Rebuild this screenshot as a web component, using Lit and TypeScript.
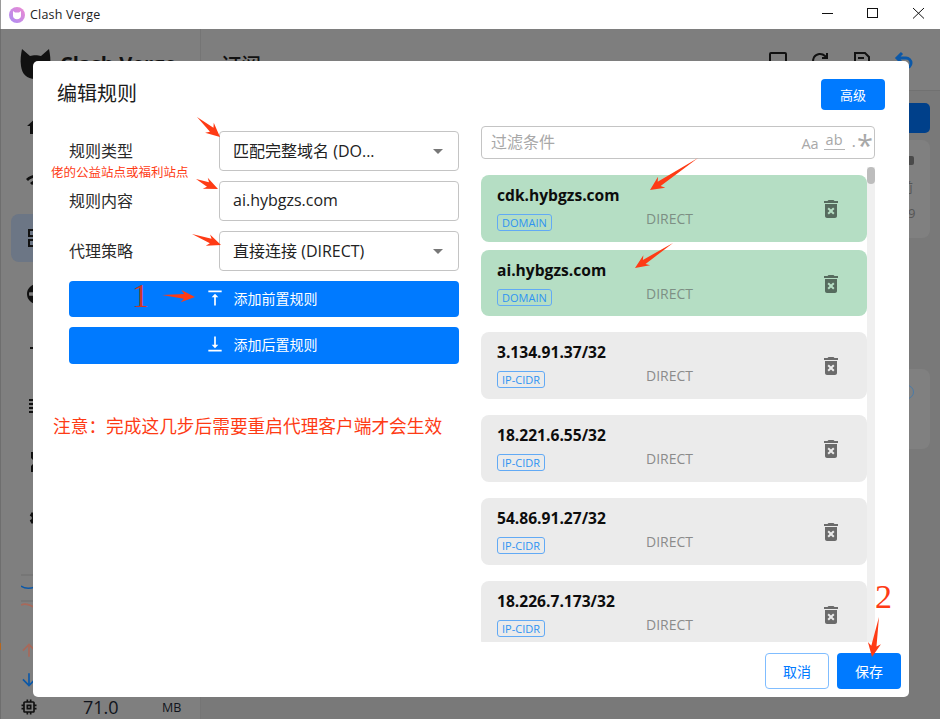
import { LitElement, css, html, svg } from 'lit';
import { customElement } from 'lit/decorators.js';

interface Rule {
  name: string;
  tag: string;
  added?: boolean;
}

const RULES: Rule[] = [
  { name: 'cdk.hybgzs.com', tag: 'DOMAIN', added: true },
  { name: 'ai.hybgzs.com', tag: 'DOMAIN', added: true },
  { name: '3.134.91.37/32', tag: 'IP-CIDR' },
  { name: '18.221.6.55/32', tag: 'IP-CIDR' },
  { name: '54.86.91.27/32', tag: 'IP-CIDR' },
  { name: '18.226.7.173/32', tag: 'IP-CIDR' }
];

// annotation arrows: tail x, tail y, tip x, tip y, head width
const ARROWS: number[][] = [
  [197, 117, 220, 137, 12],
  [196, 179, 218, 189, 11],
  [192, 234, 221, 245, 11],
  [162, 295, 195, 297, 11],
  [698, 158, 650, 190, 12],
  [673, 243, 635, 268, 11],
  [879, 617, 872, 657, 12]
];

const NAV_ICONS = [
  'M10 20v-6h4v6h5v-8h3L12 3 2 12h3v8z',
  'm1 9 2 2c4.97-4.97 13.03-4.97 18 0l2-2C16.93 2.93 7.08 2.93 1 9zm8 8 3 3 3-3c-1.65-1.66-4.34-1.66-6 0zm-4-4 2 2c2.76-2.76 7.24-2.76 10 0l2-2C15.14 9.14 8.87 9.14 5 13z',
  'M3 11h8V3H3v8zm2-6h4v4H5V5zM3 21h8v-8H3v8zm2-6h4v4H5v-4zm8-12v8h8V3h-8zm6 6h-4V5h4v4zm-6 4h3v3h-3zm3 3h3v3h-3zm3-3h2v3h-2zm-6 6h3v2h-3zm6 0h2v2h-2z',
  'M12 2C6.48 2 2 6.48 2 12s4.48 10 10 10 10-4.48 10-10S17.52 2 12 2zM4 12c0-.61.08-1.21.21-1.78h15.58c.13.57.21 1.17.21 1.78s-.08 1.21-.21 1.78H4.21A8.1 8.1 0 0 1 4 12zm8 8c-2 0-3.6-3-3.9-6.2h7.8C15.6 17 14 20 12 20zM8.1 10.2C8.4 7 10 4 12 4s3.6 3 3.9 6.2H8.1z',
  'M14.59 15.59 16 17l-4 4-4-4 1.41-1.41L11 17.17V11H5V9h8v8.17z',
  'M14 17H4v2h10v-2zm6-8H4v2h16V9zM4 15h16v-2H4v2zM4 5v2h16V5H4z',
  'M6 2h12v6l-4 4 4 4v6H6v-6l4-4-4-4V2zm2 2v3.2l4 4 4-4V4H8z',
  'M19.14 12.94a7 7 0 0 0 0-1.88l2.03-1.58-1.92-3.32-2.39.96a7 7 0 0 0-1.62-.94L14.88 3.6h-3.84l-.36 2.58c-.59.24-1.13.56-1.62.94l-2.39-.96-1.92 3.32 2.03 1.58a7 7 0 0 0 0 1.88l-2.03 1.58 1.92 3.32 2.39-.96c.49.38 1.03.7 1.62.94l.36 2.58h3.84l.36-2.58c.59-.24 1.13-.56 1.62-.94l2.39.96 1.92-3.32-2.03-1.58zM12 15.6a3.6 3.6 0 1 1 0-7.2 3.6 3.6 0 0 1 0 7.2z'
];

const TRASH =
  'M6 19c0 1.1.9 2 2 2h8c1.1 0 2-.9 2-2V7H6zm2.46-7.12 1.41-1.41L12 12.59l2.12-2.12 1.41 1.41L13.41 14l2.12 2.12-1.41 1.41L12 15.41l-2.12 2.12-1.41-1.41L10.59 14zM15.5 4l-1-1h-5l-1 1H5v2h14V4z';

function arrowPoints([x1, y1, x2, y2, w]: number[]): string {
  const dx = x2 - x1;
  const dy = y2 - y1;
  const len = Math.hypot(dx, dy);
  const nx = -dy / len;
  const ny = dx / len;
  const at = (t: number, off: number) => `${x1 + dx * t + nx * off},${y1 + dy * t + ny * off}`;
  const neck = 1 - 11 / len;
  const barb = 1 - 14 / len;
  return [
    at(0, 0),
    at(neck, w * 0.22),
    at(barb, w * 0.55),
    at(1, 0),
    at(barb, -w * 0.55),
    at(neck, -w * 0.22)
  ].join(' ');
}

@customElement('app-root')
export class AppRoot extends LitElement {
  public static override styles = css`
    :host {
      display: block;
      position: relative;
      width: 940px;
      height: 719px;
      overflow: hidden;
      background: #fff;
      font-family: 'Open Sans', 'Noto Sans CJK SC', sans-serif;
      color: #1a1a1a;
    }

    * {
      box-sizing: border-box;
    }

    .titlebar {
      display: flex;
      align-items: center;
      height: 29px;
      border-left: 1px solid #9a9a9a;
      padding-left: 8px;
      background: #fff;
      font-size: 12.5px;
      color: #222;
    }

    .titlebar .name {
      margin-left: 5px;
      letter-spacing: 0.2px;
    }

    .controls {
      display: flex;
      margin-left: auto;
    }

    .controls svg {
      display: block;
      width: 46px;
      height: 29px;
    }

    .app {
      display: flex;
      height: 690px;
      border-left: 1px solid #6e6e6e;
      background: #7f7f7f;
    }

    .sidebar {
      display: flex;
      flex-direction: column;
      width: 200px;
      border-right: 1px solid #757575;
    }

    .logo {
      display: flex;
      align-items: flex-start;
      gap: 9px;
      height: 76px;
      padding: 20px 0 0 19px;
      font-size: 20px;
      font-weight: 700;
      line-height: 30px;
      color: #111;
    }

    .logo svg {
      width: 31px;
      height: 30px;
      flex: none;
    }

    .nav {
      display: flex;
      flex-direction: column;
      padding: 0 10px;
    }

    .nav-item {
      display: flex;
      align-items: center;
      height: 48px;
      margin-bottom: 8px;
      padding-left: 14px;
      border-radius: 8px;
    }

    .nav-item.on {
      background: #6c7685;
    }

    .nav-item svg {
      width: 24px;
      height: 24px;
      fill: #111;
    }

    .graph {
      display: flex;
      flex-direction: column;
      margin: 24px 0 0 20px;
      height: 44px;
    }

    .graph svg {
      display: block;
      width: 170px;
      height: 44px;
    }

    .traffic {
      display: flex;
      flex-direction: column;
      align-items: flex-start;
      gap: 6px;
      margin: 20px 0 0 18px;
    }

    .traffic svg {
      display: block;
      width: 20px;
      height: 24px;
    }

    .memory {
      display: flex;
      align-items: center;
      height: 24px;
      margin-top: 3px;
      padding-left: 18px;
      color: #10141c;
    }

    .memory svg {
      width: 20px;
      height: 20px;
      fill: #111;
      flex: none;
    }

    .memory .value {
      width: 79px;
      margin-left: 44px;
      font-size: 18px;
    }

    .memory .unit {
      font-size: 12.5px;
    }

    .main {
      flex: 1;
      display: flex;
      flex-direction: column;
      background: #797979;
    }

    .main-head {
      display: flex;
      align-items: flex-start;
      height: 62px;
      padding: 21px 25px 0 20px;
      border-bottom: 1px solid #717171;
      background: #7e7e7e;
      font-size: 20px;
      font-weight: 500;
      color: #111;
    }

    .main-head .tools {
      display: flex;
      gap: 20px;
      margin-left: auto;
    }

    .main-head svg {
      width: 22px;
      height: 22px;
      fill: none;
      stroke: #111;
      stroke-width: 2;
    }

    .main-head svg.back {
      stroke: #0b58a8;
      stroke-width: 3;
    }

    .main-body {
      display: flex;
      flex-direction: column;
      align-items: flex-end;
      padding: 12px 10px 0 0;
    }

    .import {
      width: 60px;
      height: 30px;
      border-radius: 5px;
      background: #00408a;
    }

    .card {
      display: flex;
      flex-direction: column;
      width: 240px;
      height: 98px;
      margin-top: 7px;
      padding: 16px 0 0 218px;
      border-radius: 8px;
      background: #808080;
      font-size: 13px;
      line-height: 18px;
      color: #555;
    }

    .card .mark {
      width: 14px;
      height: 9px;
      margin: 0 0 13px -8px;
      border-radius: 2px;
      background: #4a4a4a;
    }

    .card .glyph {
      margin: 0 0 8px -8px;
    }

    .card.low {
      height: 80px;
      margin-top: 131px;
      padding: 16px 0 0 210px;
    }

    .ring {
      width: 14px;
      height: 14px;
      border: 1px solid #4a7ba8;
      border-radius: 50%;
    }

    .dialog {
      position: absolute;
      left: 33px;
      top: 61px;
      display: flex;
      flex-direction: column;
      width: 876px;
      height: 636px;
      border-radius: 5px;
      background: #fff;
    }

    .dialog-head {
      display: flex;
      align-items: center;
      justify-content: space-between;
      height: 31px;
      margin: 18px 24px 16px;
      font-size: 20px;
      color: #1c1c1c;
    }

    .dialog-head span {
      padding-bottom: 4px;
    }

    button {
      border: 0;
      font: inherit;
      border-radius: 4px;
      background: #007aff;
      color: #fff;
    }

    .advanced {
      width: 64px;
      height: 31px;
      font-size: 13px;
    }

    .dialog-body {
      flex: 1;
      display: flex;
      gap: 22px;
      min-height: 0;
      padding: 0 34px 0 36px;
    }

    .form {
      display: flex;
      flex-direction: column;
      gap: 10px;
      width: 390px;
      padding-top: 5px;
    }

    .row {
      display: flex;
      align-items: center;
      font-size: 16px;
      color: #2a2a2a;
    }

    .row label {
      width: 150px;
      padding-bottom: 2px;
    }

    .field {
      display: flex;
      align-items: center;
      justify-content: space-between;
      width: 240px;
      height: 40px;
      padding: 0 15px 2px 13px;
      border: 1px solid #c4c4c4;
      border-radius: 4px;
      color: #222;
    }

    .caret {
      width: 0;
      height: 0;
      margin-top: 2px;
      border: 5px solid transparent;
      border-top-color: #777;
      border-bottom: 0;
    }

    .action {
      display: flex;
      align-items: center;
      justify-content: center;
      gap: 9px;
      width: 390px;
      height: 36px;
      padding: 0 6px 2px 0;
      font-size: 14px;
    }

    .action svg {
      width: 20px;
      height: 20px;
      fill: #fff;
    }

    .action.tall {
      height: 37px;
      padding-bottom: 4px;
    }

    .rules {
      display: flex;
      flex-direction: column;
      width: 394px;
      min-height: 0;
    }

    .search {
      display: flex;
      align-items: center;
      height: 33px;
      padding: 0 1px 3px 9px;
      border: 1px solid #c4c4c4;
      border-radius: 4px;
      font-size: 16px;
      color: #a8a8a8;
    }

    .search .opts {
      display: flex;
      align-items: center;
      gap: 7px;
      margin-left: auto;
      color: #a8a8a8;
    }

    .opt-aa {
      font-size: 14.5px;
      margin: 5px -2px 0 0;
    }

    .opt-ab {
      height: 18px;
      padding: 0 2px;
      border-bottom: 1px solid #b5b5b5;
      font-size: 14.5px;
      line-height: 15px;
    }

    .opt-re {
      display: flex;
      align-items: flex-start;
      height: 24px;
      font-size: 17px;
      line-height: 24px;
    }

    .opt-re b {
      font-size: 29px;
      font-weight: 400;
      line-height: 32px;
      margin-left: 1px;
    }

    .scroll-wrap {
      flex: 1;
      display: flex;
      min-height: 0;
      margin-top: 8px;
    }

    .list {
      flex: 1;
      overflow: hidden;
      padding-top: 8px;
    }

    .scrollbar {
      width: 8px;
      background: #f0f0f0;
    }

    .thumb {
      height: 17px;
      border-radius: 4px;
      background: #bdbdbd;
    }

    .rule {
      display: grid;
      grid-template-columns: 149px 1fr 24px;
      grid-template-rows: 24px 31px;
      align-items: center;
      height: 67px;
      margin-bottom: 16px;
      padding: 8px 24px 0 16px;
      border-radius: 8px;
      background: #ebebeb;
    }

    .rule.added {
      margin-bottom: 8px;
      background: #b5dec4;
    }

    .rule.added + .rule.added {
      height: 66px;
    }

    .rule.added + .rule:not(.added) {
      margin-top: 16px;
    }

    .rule-name {
      grid-column: 1 / 3;
      font-size: 15.6px;
      font-weight: 700;
      color: #0d0d0d;
    }

    .tag {
      justify-self: start;
      height: 17px;
      padding: 0 4px;
      border: 1px solid #62aaf5;
      border-radius: 3px;
      font-size: 11px;
      line-height: 15px;
      color: #2f93f2;
    }

    .direct {
      margin-top: -9px;
      font-size: 14px;
      color: #8b8b8b;
    }

    .rule.added .direct {
      color: #7d8f84;
    }

    .rule svg {
      grid-column: 3;
      grid-row: 1 / 3;
      width: 24px;
      height: 24px;
      margin-top: -4px;
      fill: #6b6b6b;
    }

    .rule.added svg {
      fill: #566b5e;
    }

    .dialog-foot {
      display: flex;
      justify-content: flex-end;
      gap: 8px;
      padding: 11px 8px 8px;
    }

    .dialog-foot button {
      width: 64px;
      height: 36px;
      font-size: 14px;
    }

    .dialog-foot .cancel {
      border: 1px solid #80bdff;
      background: #fff;
      color: #007aff;
    }

    .marks {
      position: absolute;
      inset: 0;
      width: 940px;
      height: 719px;
      pointer-events: none;
    }

    .note {
      position: absolute;
      left: 53px;
      top: 413px;
      font-size: 17.7px;
      line-height: 26px;
      white-space: nowrap;
      color: #fe3b15;
    }

    .hint {
      position: absolute;
      left: 51px;
      top: 164px;
      font-size: 12.5px;
      line-height: 18px;
      white-space: nowrap;
      color: #fe3b15;
    }

    .num {
      position: absolute;
      font-family: 'Liberation Serif', serif;
      font-size: 34px;
      line-height: 34px;
      color: #fe3b15;
    }

    .num.one {
      left: 132px;
      top: 279px;
      color: #c9362a;
    }

    .num.two {
      left: 875px;
      top: 580px;
    }
  `;

  private renderRule(rule: Rule) {
    return html`
      <div class="rule ${rule.added ? 'added' : ''}">
        <div class="rule-name">${rule.name}</div>
        <div class="tag">${rule.tag}</div>
        <div class="direct">DIRECT</div>
        <svg viewBox="0 0 24 24"><path d=${TRASH}></path></svg>
      </div>
    `;
  }

  private renderBackground() {
    return html`
      <div class="app">
        <div class="sidebar">
          <div class="logo">
            <svg viewBox="0 0 31 30">
              <path
                fill="#111"
                d="M2 0l8 7c3-1 8-1 11 0l8-7c1 5 2 11 1 17-1 8-7 13-15 13S2 25 1 17C0 11 1 5 2 0z"
              ></path>
            </svg>
            Clash Verge
          </div>
          <div class="nav">
            ${NAV_ICONS.map(
              (d, i) => html`
                <div class="nav-item ${i === 2 ? 'on' : ''}">
                  <svg viewBox="0 0 24 24"><path d=${d}></path></svg>
                </div>
              `
            )}
          </div>
          <div class="graph">
            <svg viewBox="0 0 170 44" fill="none">
              <path d="M0 1h170M0 27h170" stroke="#6f6f6f"></path>
              <path d="M0 12c4 3 8 3 14 1" stroke="#0b58a8" stroke-width="1.5"></path>
              <path d="M0 31c4-2 8-1 14 3" stroke="#a8695a" stroke-width="1.5"></path>
            </svg>
          </div>
          <div class="traffic">
            <svg viewBox="0 0 24 24"><path fill="#a8695a" d="m4 12 1.41 1.41L11 7.83V20h2V7.83l5.58 5.59L20 12l-8-8z"></path></svg>
            <svg viewBox="0 0 24 24"><path fill="#0b58a8" d="m20 12-1.41-1.41L13 16.17V4h-2v12.17l-5.58-5.59L4 12l8 8z"></path></svg>
          </div>
          <div class="memory">
            <svg viewBox="0 0 24 24">
              <path
                d="M15 9H9v6h6V9zm-2 4h-2v-2h2v2zm8-2V9h-2V7c0-1.1-.9-2-2-2h-2V3h-2v2h-2V3H9v2H7c-1.1 0-2 .9-2 2v2H3v2h2v2H3v2h2v2c0 1.1.9 2 2 2h2v2h2v-2h2v2h2v-2h2c1.1 0 2-.9 2-2v-2h2v-2h-2v-2h2zm-4 6H7V7h10v10z"
              ></path>
            </svg>
            <span class="value">71.0</span>
            <span class="unit">MB</span>
          </div>
        </div>
        <div class="main">
          <div class="main-head">
            订阅
            <div class="tools">
              <svg viewBox="0 0 22 22"><rect x="3" y="3" width="16" height="16" rx="1"></rect></svg>
              <svg viewBox="0 0 22 22"><path d="M18 11a7 7 0 1 1-2-5l2 2M18 3v5h-5"></path></svg>
              <svg viewBox="0 0 22 22"><path d="M4 3h10l4 4v12H4zM7 8h6M7 12h8"></path></svg>
              <svg class="back" viewBox="0 0 22 22"><path d="M9 3 4 8l5 5M4 8h9a5 5 0 0 1 0 10h-2"></path></svg>
            </div>
          </div>
          <div class="main-body">
            <div class="import"></div>
            <div class="card">
              <div class="mark"></div>
              <span class="glyph">前</span>
              <span>9</span>
            </div>
            <div class="card low"><div class="ring"></div></div>
          </div>
        </div>
      </div>
    `;
  }

  public override render() {
    return html`
      <div class="titlebar">
        <svg width="16" height="16" viewBox="0 0 16 16">
          <defs>
            <linearGradient id="cat" x1="0" y1="1" x2="1" y2="0">
              <stop offset="0" stop-color="#a98cf5"></stop>
              <stop offset="1" stop-color="#f08ad0"></stop>
            </linearGradient>
          </defs>
          <circle cx="8" cy="8" r="8" fill="url(#cat)"></circle>
          <path fill="#fff" d="M4 4l2 1.6h4L12 4v5c0 2-1.8 3.2-4 3.2S4 11 4 9z"></path>
        </svg>
        <span class="name">Clash Verge</span>
        <div class="controls">
          <svg viewBox="0 0 46 29"><path d="M20 13.5h11" stroke="#111" fill="none"></path></svg>
          <svg viewBox="0 0 46 29"><rect x="19.5" y="8.5" width="10" height="9" stroke="#111" fill="none"></rect></svg>
          <svg viewBox="0 0 46 29"><path d="M19 8l11 10.5M30 8 19 18.5" stroke="#111" fill="none"></path></svg>
        </div>
      </div>
      ${this.renderBackground()}

      <div class="dialog">
        <div class="dialog-head">
          <span>编辑规则</span>
          <button class="advanced">高级</button>
        </div>
        <div class="dialog-body">
          <div class="form">
            <div class="row">
              <label>规则类型</label>
              <div class="field"><span>匹配完整域名 (DO...</span><span class="caret"></span></div>
            </div>
            <div class="row">
              <label>规则内容</label>
              <div class="field">ai.hybgzs.com</div>
            </div>
            <div class="row">
              <label>代理策略</label>
              <div class="field"><span>直接连接 (DIRECT)</span><span class="caret"></span></div>
            </div>
            <button class="action">
              <svg viewBox="0 0 24 24"><path d="M8 11h3v10h2V11h3l-4-4-4 4zM4 3v2h16V3H4z"></path></svg>
              添加前置规则
            </button>
            <button class="action tall">
              <svg viewBox="0 0 24 24"><path d="M16 13h-3V3h-2v10H8l4 4 4-4zM4 19v2h16v-2H4z"></path></svg>
              添加后置规则
            </button>
          </div>
          <div class="rules">
            <div class="search">
              过滤条件
              <div class="opts">
                <span class="opt-aa">Aa</span>
                <span class="opt-ab">ab</span>
                <span class="opt-re">.<b>*</b></span>
              </div>
            </div>
            <div class="scroll-wrap">
              <div class="list">${RULES.map((rule) => this.renderRule(rule))}</div>
              <div class="scrollbar"><div class="thumb"></div></div>
            </div>
          </div>
        </div>
        <div class="dialog-foot">
          <button class="cancel">取消</button>
          <button>保存</button>
        </div>
      </div>

      <div class="hint">佬的公益站点或福利站点</div>
      <div class="note">注意：完成这几步后需要重启代理客户端才会生效</div>
      <div class="num one">1</div>
      <div class="num two">2</div>
      <svg class="marks" viewBox="0 0 940 719">
        <rect x="0" y="643" width="1" height="7" fill="#b5651d"></rect>
        ${ARROWS.map((a) => svg`<polygon points=${arrowPoints(a)} fill="#fe3b15"></polygon>`)}
      </svg>
    `;
  }
}
